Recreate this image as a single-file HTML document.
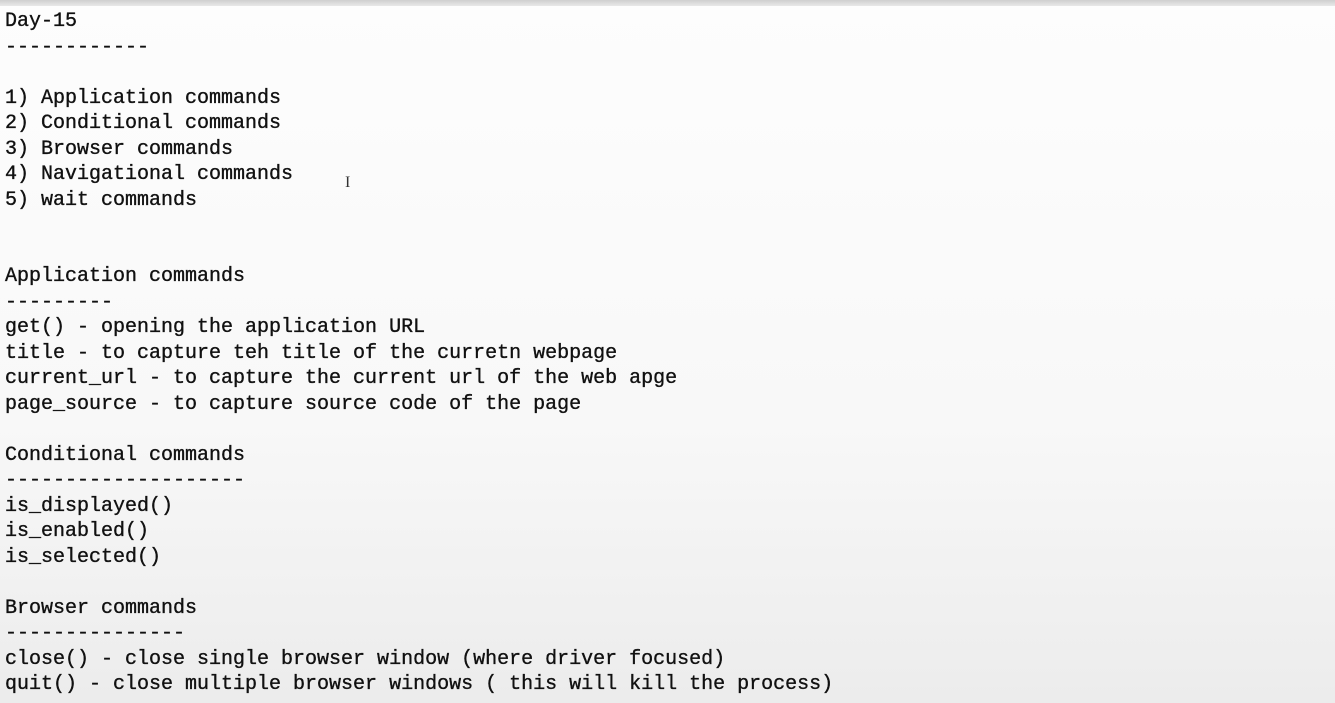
<!DOCTYPE html>
<html><head><meta charset="utf-8"><style>
html,body{margin:0;padding:0;width:1335px;height:703px;overflow:hidden}
body{background:linear-gradient(180deg,#fdfdfd 0%,#f8f8f8 60%,#ececec 100%);position:relative}
.top{position:absolute;left:0;top:0;width:1335px;height:6px;background:linear-gradient(#cfcfcf,#e8e8e8)}
pre{position:absolute;left:5px;top:9px;margin:0;font-family:"Liberation Mono",monospace;font-size:20px;line-height:25.5px;color:#111;-webkit-text-stroke:0.35px #111;letter-spacing:0}
.cur{position:absolute;left:345px;top:174px;font-family:"Liberation Serif",serif;font-size:16px;color:#333}
</style></head><body>
<div class="top"></div>
<pre>Day-15
------------

1) Application commands
2) Conditional commands
3) Browser commands
4) Navigational commands
5) wait commands


Application commands
---------
get() - opening the application URL
title - to capture teh title of the curretn webpage
current_url - to capture the current url of the web apge
page_source - to capture source code of the page

Conditional commands
--------------------
is_displayed()
is_enabled()
is_selected()

Browser commands
---------------
close() - close single browser window (where driver focused)
quit() - close multiple browser windows ( this will kill the process)</pre>
<div class="cur">I</div>
</body></html>
